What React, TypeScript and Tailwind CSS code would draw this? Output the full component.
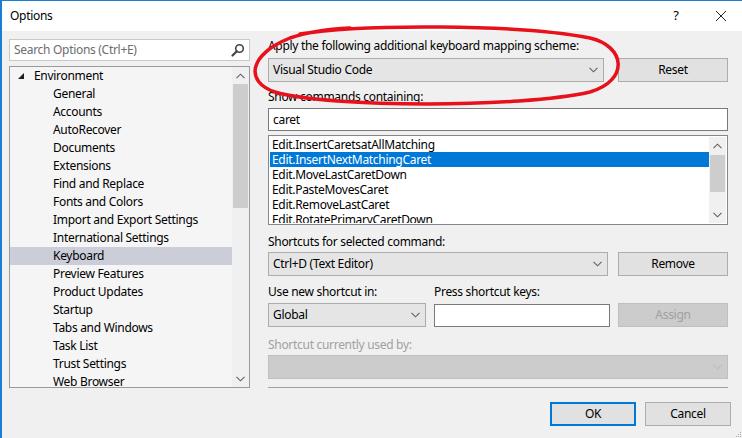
import React from "react";

const treeItems = [
  "General",
  "Accounts",
  "AutoRecover",
  "Documents",
  "Extensions",
  "Find and Replace",
  "Fonts and Colors",
  "Import and Export Settings",
  "International Settings",
  "Keyboard",
  "Preview Features",
  "Product Updates",
  "Startup",
  "Tabs and Windows",
  "Task List",
  "Trust Settings",
  "Web Browser",
];

const commands = [
  "Edit.InsertCaretsatAllMatching",
  "Edit.InsertNextMatchingCaret",
  "Edit.MoveLastCaretDown",
  "Edit.PasteMovesCaret",
  "Edit.RemoveLastCaret",
  "Edit.RotatePrimaryCaretDown",
];

function Chevron({ down = true, color = "#606060" }: { down?: boolean; color?: string }) {
  return (
    <svg width="9" height="6" viewBox="0 0 9 6" className="shrink-0">
      <polyline
        points={down ? "0.5,0.8 4.5,4.8 8.5,0.8" : "0.5,5.2 4.5,1.2 8.5,5.2"}
        fill="none"
        stroke={color}
        strokeWidth="1.1"
      />
    </svg>
  );
}

function Combo({ value, className, disabled = false }: { value: string; className: string; disabled?: boolean }) {
  return (
    <div
      className={`flex items-center justify-between pl-[4px] pr-[5px] h-[24px] border ${
        disabled ? "bg-[#cccccc] border-[#bfbfbf]" : "bg-[#e5e5e5] border-[#acacac]"
      } ${className}`}
    >
      <span className="leading-[16px]">{value}</span>
      <Chevron color={disabled ? "#bdbdbd" : "#606060"} />
    </div>
  );
}

function Button({ label, className = "", disabled = false, primary = false }: { label: string; className?: string; disabled?: boolean; primary?: boolean }) {
  return (
    <div
      className={`flex items-center justify-center h-[24px] ${
        primary
          ? "border-2 border-[#0078d7] bg-[#e1e1e1]"
          : disabled
          ? "border border-[#bfbfbf] bg-[#cccccc] text-[#a0a0a0]"
          : "border border-[#adadad] bg-[#e1e1e1]"
      } ${className}`}
    >
      {label}
    </div>
  );
}

function ScrollBar({ thumbTop, thumbHeight }: { thumbTop: number; thumbHeight: number }) {
  return (
    <div className="w-[17px] h-full bg-[#f0f0f0] flex flex-col items-center relative">
      <div className="h-[17px] flex items-center justify-center">
        <Chevron down={false} color="#606060" />
      </div>
      <div className="flex-1 w-full relative">
        <div
          className="absolute left-[1px] right-[1px] bg-[#cdcdcd]"
          style={{ top: thumbTop, height: thumbHeight }}
        />
      </div>
      <div className="h-[17px] flex items-center justify-center">
        <Chevron color="#606060" />
      </div>
    </div>
  );
}

export default function App() {
  return (
    <div className="relative w-[742px] h-[438px] overflow-hidden bg-[#f0f0f0] border-t border-l-2 border-[#1a7fd4] flex flex-col text-[12px] tracking-[-0.3px] text-black font-['Noto_Sans',sans-serif]">
      {/* title bar */}
      <div className="h-[30px] bg-white flex items-center pl-[8px] shrink-0">
        <span className="text-[12px]">Options</span>
        <div className="flex-1" />
        <span className="w-[20px] text-center text-[13px] mr-[29px]">?</span>
        <svg width="12" height="12" viewBox="0 0 12 12" className="mr-[15px]">
          <path d="M1 1 L11 11 M11 1 L1 11" stroke="#222" strokeWidth="1" />
        </svg>
      </div>

      <div className="flex flex-1">
        {/* left column */}
        <div className="w-[241px] ml-[7px] flex flex-col">
          <div className="mt-[8px] h-[22px] bg-white border border-[#c8c8c8] flex items-center pl-[4px] pr-[4px]">
            <span className="flex-1 text-[#6d6d6d]">Search Options (Ctrl+E)</span>
            <svg width="14" height="14" viewBox="0 0 14 14">
              <circle cx="8.5" cy="5.5" r="3.8" fill="none" stroke="#444" strokeWidth="1.6" />
              <path d="M5.8 8.2 L1.5 12.5" stroke="#444" strokeWidth="2.2" strokeLinecap="round" />
            </svg>
          </div>
          <div className="mt-[5px] h-[322px] border border-[#9a9a9a] bg-[#f5f5f5] flex">
            <div className="flex-1 overflow-hidden">
              <div className="h-[18px] flex items-center">
                <svg width="6" height="6" viewBox="0 0 6 6" className="ml-[8px] mr-[10px]">
                  <polygon points="6,0 6,6 0,6" fill="#1e1e1e" />
                </svg>
                <span>Environment</span>
              </div>
              {treeItems.map((t) => (
                <div
                  key={t}
                  className={`h-[18px] flex items-center pl-[43px] ${t === "Keyboard" ? "bg-[#cbcdd9]" : ""}`}
                >
                  {t}
                </div>
              ))}
            </div>
            <ScrollBar thumbTop={0} thumbHeight={124} />
          </div>
        </div>

        {/* right column */}
        <div className="w-[460px] ml-[18px] flex flex-col">
          <div className="mt-[7px] h-[16px] leading-[16px]">Apply the following additional keyboard mapping scheme:</div>
          <div className="mt-[4px] flex items-center gap-[14px]">
            <Combo value="Visual Studio Code" className="w-[336px]" />
            <Button label="Reset" className="w-[110px]" />
          </div>
          <div className="mt-[7px] h-[16px] leading-[16px]">Show commands containing:</div>
          <div className="mt-[3px] h-[23px] bg-white border border-[#7a7a7a] flex items-center pl-[4px]">caret</div>
          <div className="mt-[4px] h-[90px] bg-white border border-[#828790] flex p-[1px]">
            <div className="flex-1 overflow-hidden">
              {commands.map((c, i) => (
                <div
                  key={c}
                  className={`h-[15px] leading-[15px] pl-[2px] ${i === 1 ? "bg-[#0078d7] text-white" : ""}`}
                >
                  {c}
                </div>
              ))}
            </div>
            <ScrollBar thumbTop={1} thumbHeight={37} />
          </div>
          <div className="mt-[9px] h-[16px] leading-[16px]">Shortcuts for selected command:</div>
          <div className="mt-[2px] flex items-center gap-[10px]">
            <Combo value="Ctrl+D (Text Editor)" className="w-[340px]" />
            <Button label="Remove" className="w-[110px]" />
          </div>
          <div className="mt-[8px] flex h-[16px] leading-[16px]">
            <span className="w-[166px]">Use new shortcut in:</span>
            <span>Press shortcut keys:</span>
          </div>
          <div className="mt-[3px] flex items-center">
            <Combo value="Global" className="w-[158px] h-[23px]" />
            <div className="ml-[8px] w-[176px] h-[23px] bg-white border border-[#7a7a7a]" />
            <Button label="Assign" disabled className="ml-[8px] w-[110px]" />
          </div>
          <div className="mt-[10px] h-[16px] leading-[16px] text-[#a0a0a0]">Shortcut currently used by:</div>
          <Combo value="" disabled className="mt-[2px] w-[460px]" />
          <div className="mt-[8px] h-px bg-[#a0a0a0]" />
          <div className="mt-[14px] flex justify-end gap-[9px] mr-[-3px]">
            <Button label="OK" primary className="w-[86px]" />
            <Button label="Cancel" className="w-[86px]" />
          </div>
        </div>
      </div>

      {/* resize grip */}
      <div className="absolute right-[1px] bottom-[1px] grid grid-cols-3 gap-[1px]">
        {[0, 0, 1, 0, 1, 1, 1, 1, 1].map((v, i) => (
          <div key={i} className={`w-[1px] h-[1px] ${v ? "bg-[#b0b0b0]" : ""}`} />
        ))}
      </div>

      {/* red annotation ellipse */}
      <svg className="absolute left-0 top-0 pointer-events-none" width="742" height="438" viewBox="2 1 742 438">
        <path
          d="M300 34 C360 24, 520 24, 590 38 C625 46, 630 80, 590 92 C520 108, 330 108, 275 92 C245 82, 248 55, 290 38 C310 31, 330 29, 350 28"
          fill="none"
          stroke="#e8101a"
          strokeWidth="3.5"
          strokeLinecap="round"
        />
      </svg>
    </div>
  );
}
